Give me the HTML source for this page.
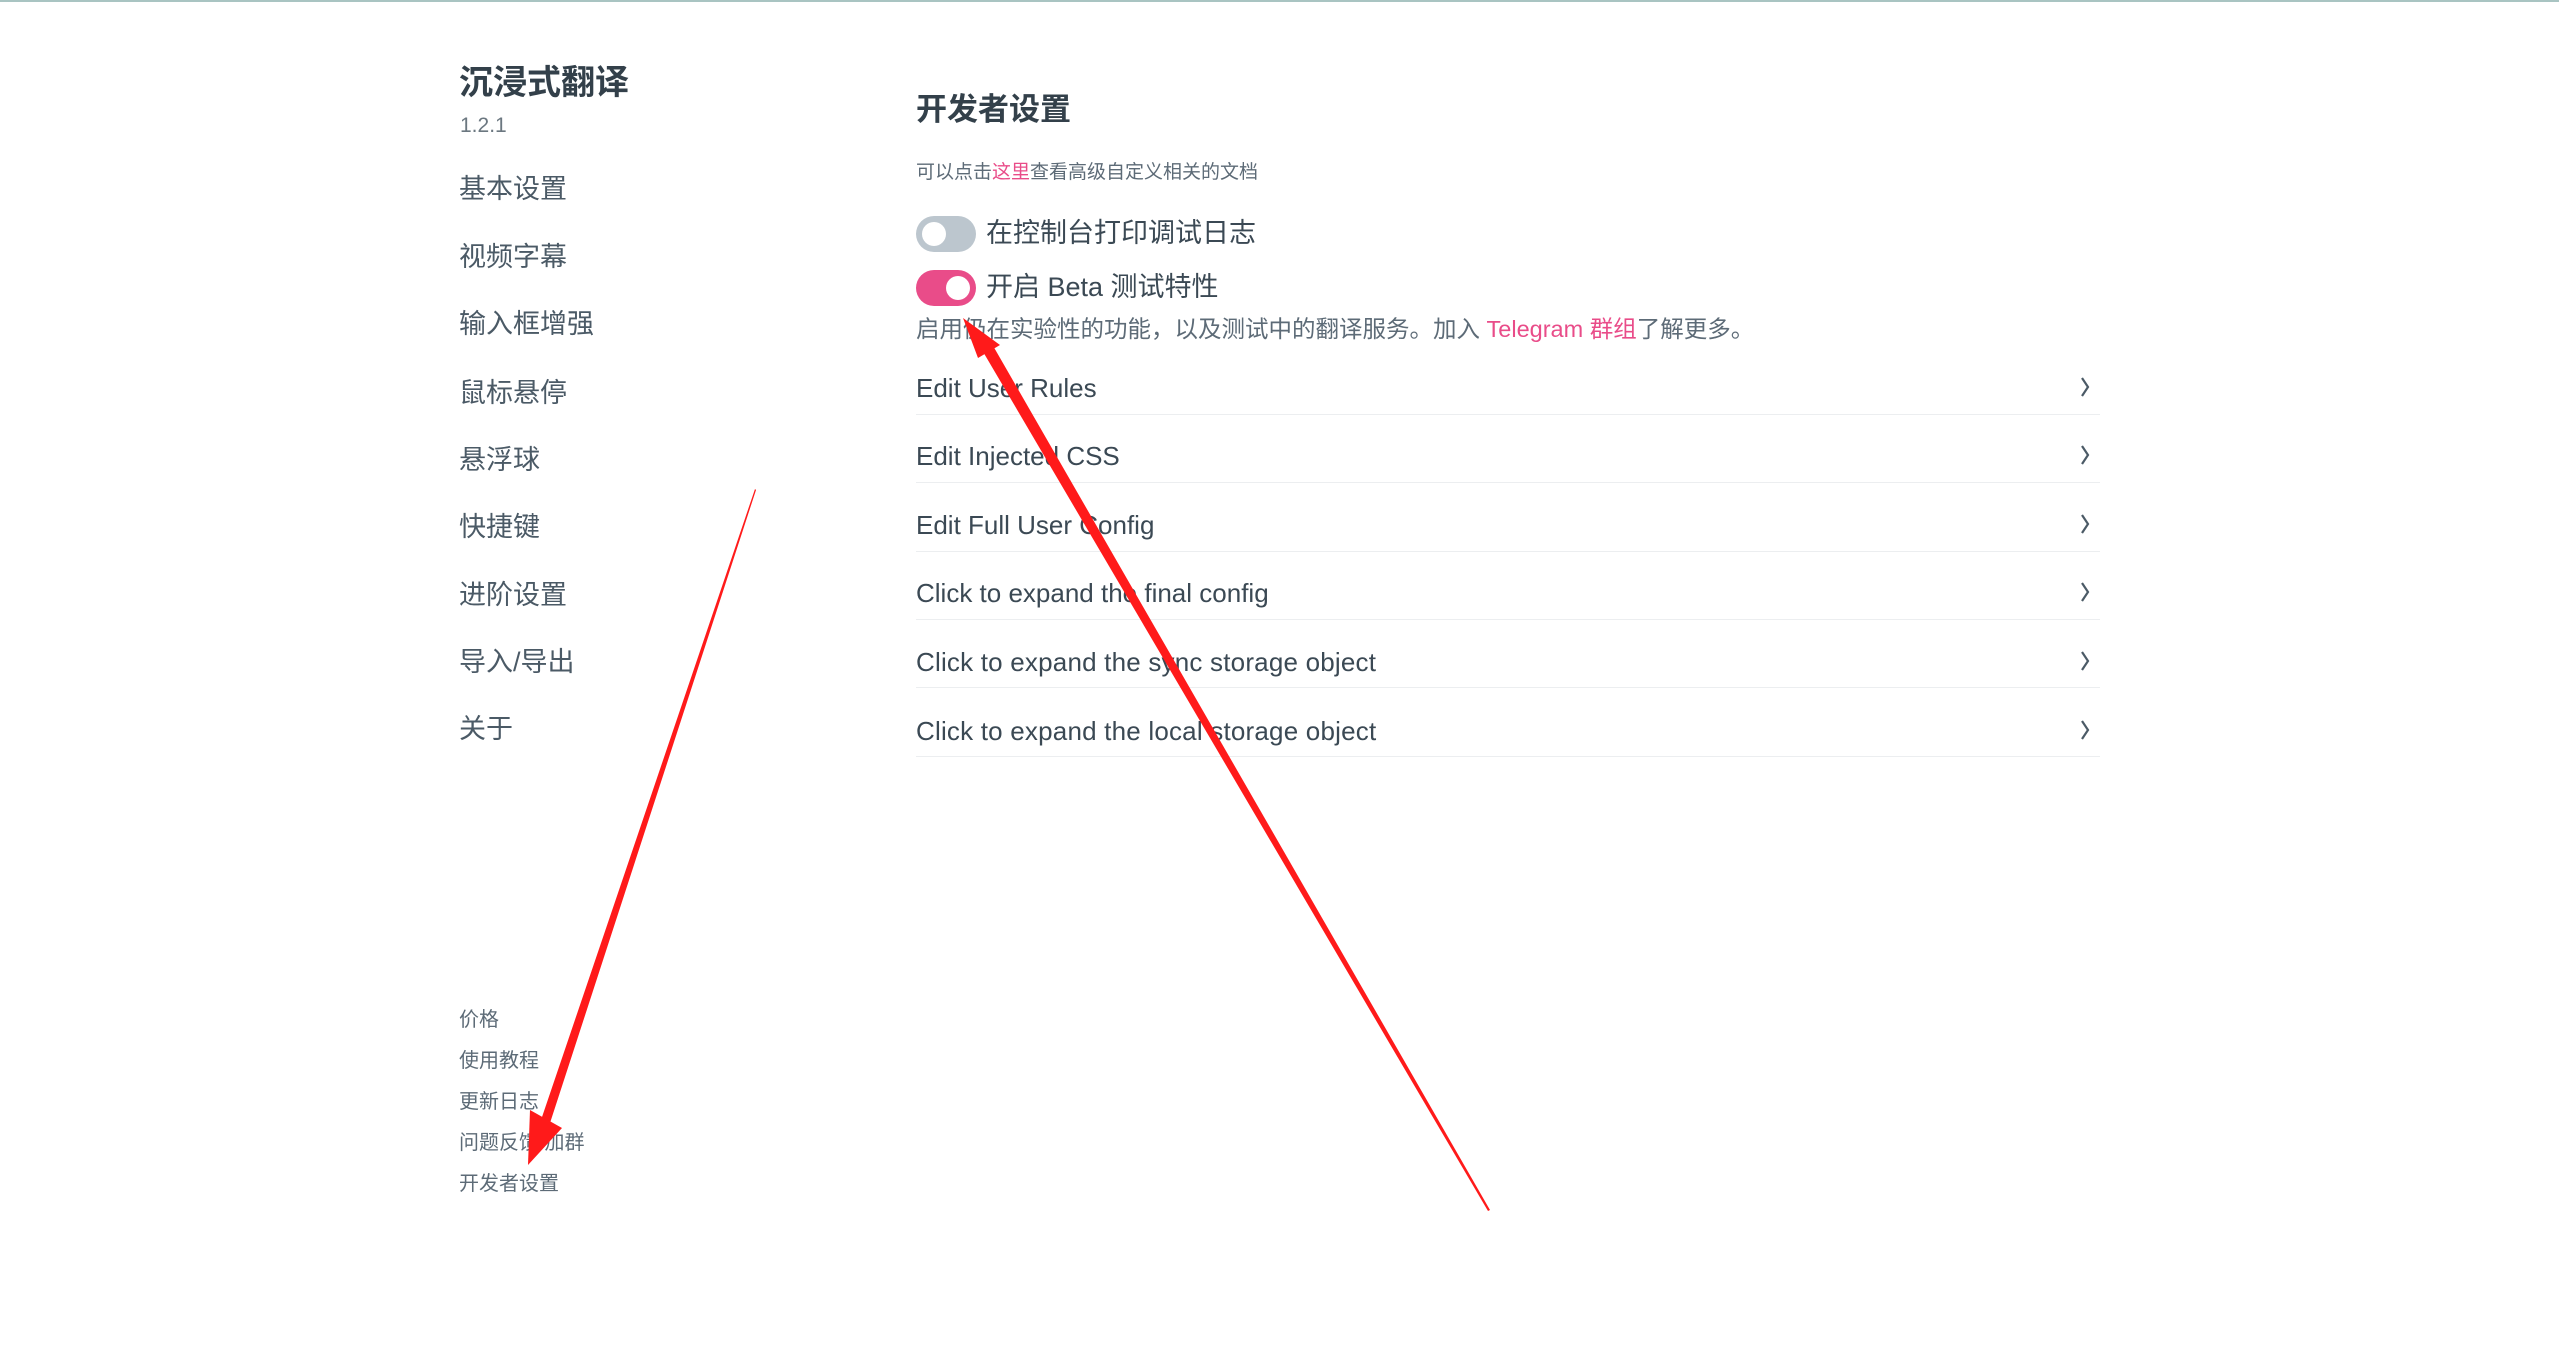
<!DOCTYPE html>
<html><head><meta charset="utf-8"><style>
html,body{margin:0;padding:0;}
body{width:2559px;height:1348px;position:relative;background:#fff;overflow:hidden;font-family:"Liberation Sans","Noto Sans CJK SC",sans-serif;color:#3b4954;}
.w{position:absolute;left:0;top:2px;width:2559px;height:1346px;}
.a{position:absolute;white-space:nowrap;line-height:1;}
.top{position:absolute;left:0;top:0;width:2559px;height:2px;background:#a9c4c2;}
.menu{font-size:27px;color:#4b5a66;}
.foot{font-size:20px;color:#5d6b77;}
.tog{position:absolute;width:60px;height:36px;border-radius:18px;}
.tog i{position:absolute;top:6px;width:24px;height:24px;border-radius:50%;background:#fff;}
.row{position:absolute;left:916px;width:1184px;height:1px;background:#eceef0;}
.pk{color:#e94c89;}
.en{font-size:26px;}
</style></head><body>
<div class="top"></div>
<div class="w">
<div class="a" style="left:459px;top:64px;font-size:34px;font-weight:bold;color:#33404a;">沉浸式翻译</div>
<div class="a" style="left:460px;top:113px;font-size:21px;color:#6b7780;">1.2.1</div>
<div class="a menu" style="left:459px;top:174px;">基本设置</div>
<div class="a menu" style="left:459px;top:242px;">视频字幕</div>
<div class="a menu" style="left:459px;top:309px;">输入框增强</div>
<div class="a menu" style="left:459px;top:378px;">鼠标悬停</div>
<div class="a menu" style="left:459px;top:445px;">悬浮球</div>
<div class="a menu" style="left:459px;top:512px;">快捷键</div>
<div class="a menu" style="left:459px;top:580px;">进阶设置</div>
<div class="a menu" style="left:459px;top:647px;">导入/导出</div>
<div class="a menu" style="left:459px;top:714px;">关于</div>
<div class="a foot" style="left:459px;top:1008px;">价格</div>
<div class="a foot" style="left:459px;top:1049px;">使用教程</div>
<div class="a foot" style="left:459px;top:1090px;">更新日志</div>
<div class="a foot" style="left:459px;top:1131px;">问题反馈/加群</div>
<div class="a foot" style="left:459px;top:1172px;">开发者设置</div>

<div class="a" style="left:916px;top:92px;font-size:31px;font-weight:bold;color:#33404a;">开发者设置</div>
<div class="a" style="left:916px;top:161px;font-size:19px;color:#5d6b77;">可以点击<span class="pk">这里</span>查看高级自定义相关的文档</div>
<div class="tog" style="left:916px;top:214px;background:#bcc6ce;"><i style="left:6px;"></i></div>
<div class="a" style="left:986px;top:218px;font-size:27px;color:#3b4954;">在控制台打印调试日志</div>
<div class="tog" style="left:916px;top:268px;background:#e94c89;"><i style="left:30px;"></i></div>
<div class="a" style="left:986px;top:272px;font-size:27px;color:#3b4954;">开启 Beta 测试特性</div>
<div class="a" style="left:916px;top:316px;font-size:23.5px;color:#5d6b77;">启用仍在实验性的功能，以及测试中的翻译服务。加入 <span class="pk">Telegram 群组</span>了解更多。</div>

<div class="a en" style="left:916px;top:373px;">Edit User Rules</div>
<div class="row" style="top:412px"></div>
<div class="a en" style="left:916px;top:441px;">Edit Injected CSS</div>
<div class="row" style="top:480px"></div>
<div class="a en" style="left:916px;top:510px;">Edit Full User Config</div>
<div class="row" style="top:549px"></div>
<div class="a en" style="left:916px;top:578px;">Click to expand the final config</div>
<div class="row" style="top:617px"></div>
<div class="a en" style="left:916px;top:647px;letter-spacing:0.2px;">Click to expand the sync storage object</div>
<div class="row" style="top:685px"></div>
<div class="a en" style="left:916px;top:716px;letter-spacing:0.2px;">Click to expand the local storage object</div>
<div class="row" style="top:754px"></div>
</div>

<svg width="2559" height="1348" style="position:absolute;left:0;top:0" >
<g fill="none" stroke="#4b5a66" stroke-width="2.2">
<path d="M2082 378 l6 9 -6 9"/>
<path d="M2082 446 l6 9 -6 9"/>
<path d="M2082 515 l6 9 -6 9"/>
<path d="M2082 583 l6 9 -6 9"/>
<path d="M2082 652 l6 9 -6 9"/>
<path d="M2082 721 l6 9 -6 9"/>
</g>
<g fill="#ff1a1a">
<polygon points="1490,1210 1488,1211 982,350 992,344"/>
<polygon points="963,318 1000,345 978,358"/>
<polygon points="756,490 755,489 541,1120 550,1123"/>
<polygon points="528,1165 530,1110 562,1128"/>
</g>
</svg>
</body></html>
